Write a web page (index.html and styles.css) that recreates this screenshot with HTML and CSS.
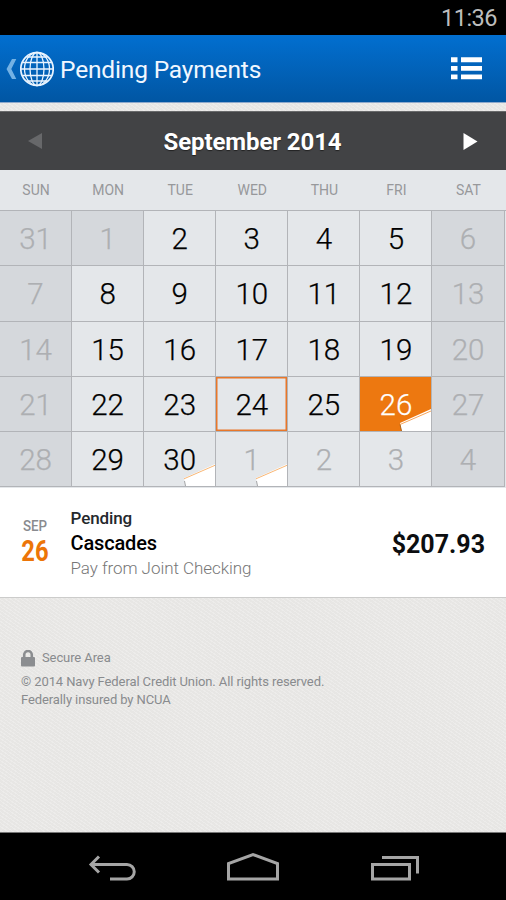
FILE: index.html
```html
<!DOCTYPE html>
<html lang="en">
<head>
<meta charset="utf-8">
<title>Pending Payments</title>
<link rel="stylesheet" href="styles.css">
</head>
<body>
<div class="status">11:36</div>
<header class="appbar">
  <svg class="back" width="12" height="22" viewBox="0 0 12 22"><path d="M6 1h4.300L5.300 11l5 10H6L0.500 11z" fill="#73b1e4"/></svg>
  <svg class="globe" width="34" height="36" viewBox="0 0 34 36" fill="none" stroke="#e9f4ff" stroke-width="1.300">
    <ellipse cx="17" cy="18" rx="16.200" ry="16.500" stroke-width="1.700"/>
    <ellipse cx="17" cy="18" rx="12.500" ry="16.500"/><ellipse cx="17" cy="18" rx="7" ry="16.500"/>
    <path d="M17 1.500v33M1 18h32M2.500 11.500h29M2.500 24.500h29M6.500 6h21M6.500 30h21"/>
  </svg>
  <h1>Pending Payments</h1>
  <svg class="list" width="31" height="23" viewBox="0 0 31 23" fill="#fff"><path d="M0 .3h6.500v5H0zM10 .3h21v5H10zM0 9h6.500v4.700H0zM10 9h21v4.700H10zM0 17.500h6.500v4.800H0zM10 17.500h21v4.800H10z"/></svg>
</header>
<nav class="month">
  <svg width="14" height="16" viewBox="0 0 14 16"><path d="M14 0v16L0 8z" fill="#67686a"/></svg>
  <h2>September 2014</h2>
  <svg width="15" height="17" viewBox="0 0 15 17"><path d="M.5 0v17l14-8.500z" fill="#fff"/></svg>
</nav>
<div class="week days"><span>SUN</span><span>MON</span><span>TUE</span><span>WED</span><span>THU</span><span>FRI</span><span>SAT</span></div>
<main class="week dates">
  <div class="off dim">31</div><div class="off dim">1</div><div>2</div><div>3</div><div>4</div><div>5</div><div class="off dim">6</div>
  <div class="off dim">7</div><div>8</div><div>9</div><div>10</div><div>11</div><div>12</div><div class="off dim">13</div>
  <div class="off dim">14</div><div>15</div><div>16</div><div>17</div><div>18</div><div>19</div><div class="off dim">20</div>
  <div class="off dim">21</div><div>22</div><div>23</div><div class="today">24</div><div>25</div>
  <div class="picked">26<svg class="fold" width="32" height="22" viewBox="0 0 32 22"><path d="M1 14L32 0v22H2.500z" fill="#fff"/><path d="M1 15.500L32 2" stroke="#f6a55b" fill="none"/><path d="M1 15.500L2.500 22" stroke="#a7641f" fill="none"/></svg></div>
  <div class="off dim">27</div>
  <div class="off dim">28</div><div>29</div>
  <div>30<svg class="fold" width="32" height="22" viewBox="0 0 32 22"><path d="M1 14L32 0v22H2.500z" fill="#fff"/><path d="M1 14.800L32 1.300" stroke="#f9b775" fill="none"/><path d="M1.500 17L2.500 22" stroke="#a4a5a7" fill="none"/></svg></div>
  <div class="dim">1<svg class="fold" width="32" height="22" viewBox="0 0 32 22"><path d="M1 14L32 0v22H2.500z" fill="#fff"/><path d="M1 14.800L32 1.300" stroke="#f9b775" fill="none"/><path d="M1.500 17L2.500 22" stroke="#a4a5a7" fill="none"/></svg></div>
  <div class="dim">2</div><div class="dim">3</div><div class="off dim">4</div>
</main>
<section class="payment">
  <div class="date"><span class="mon">SEP</span><span class="num">26</span></div>
  <div class="info"><span class="state">Pending</span><span class="payee">Cascades</span><span class="from">Pay from Joint Checking</span></div>
  <div class="amount">$207.93</div>
</section>
<footer class="legal">
  <div class="secure"><svg width="14" height="17" viewBox="0 0 14 17"><path d="M3.200 8V4.800a3.800 3.800 0 0 1 7.600 0V8" fill="none" stroke="#8b8d90" stroke-width="2.600"/><rect y="7" width="14" height="9.500" rx="1" fill="#8b8d90"/></svg><span>Secure Area</span></div>
  <p>© 2014 Navy Federal Credit Union. All rights reserved.<br>Federally insured by NCUA</p>
</footer>
<div class="navbar">
  <svg width="506" height="67" viewBox="0 0 506 67" fill="none" stroke="#a5a5a5" stroke-width="3">
    <path d="M91 31.500h36a7 7 0 0 1 0 14.500h-17M99 23.500l-8 8 8 8"/>
    <path d="M228.500 46V30.500l24.500-9 24.500 9V46z"/>
    <path d="M372.500 31.500h37V46h-37zM382 24.500h35.500V40.500"/>
  </svg>
</div>
</body>
</html>
```
FILE: styles.css
```css
* { box-sizing: border-box; }
body {
  margin: 0;
  width: 506px;
  height: 900px;
  overflow: hidden;
  display: flex;
  flex-direction: column;
  font-family: Roboto, "Liberation Sans", sans-serif;
  background-color: #e9e8e6;
  background-image: repeating-linear-gradient(35deg, rgba(255,255,255,.18) 0 1px, rgba(0,0,0,.008) 1px 3px);
}
h1, h2, p { margin: 0; }
svg { display: block; flex: none; }
.status {
  flex: none;
  height: 35px;
  padding: 0 9px 0 0;
  background: #000;
  color: #bdbdbd;
  font-size: 23.5px;
  letter-spacing: -.5px;
  line-height: 36px;
  text-align: right;
}
.appbar {
  flex: none;
  height: 68px;
  display: flex;
  align-items: center;
  padding: 0 24px 0 6px;
  background: linear-gradient(#026fd0, #0156a3);
  border-bottom: 1px solid #8ea9cc;
  color: #f1f7ff;
}
.back { margin-right: 2px; }
.globe { margin-right: 6px; }
.appbar h1 { flex: 1; font-size: 24.500px; font-weight: 400; letter-spacing: -.16px; line-height: 34px; padding-top: 2px; white-space: nowrap; }
.month {
  flex: none;
  height: 59px;
  margin-top: 8px;
  padding: 0 28px;
  display: flex;
  align-items: center;
  justify-content: space-between;
  background: #424345;
  border-top: 1px solid #696a6b;
  color: #fff;
}
.month h2 { font-size: 24px; font-weight: 700; letter-spacing: -.1px; padding-top: 1px; text-shadow: 0 1px 1px #222; }
.week { flex: none; display: grid; grid-template-columns: repeat(7, 72.080px); background: #e4e7ea; }
.days {
  height: 41px;
  border-bottom: 1px solid #b2b4b8;
  color: #97989b;
  font-size: 14px;
  line-height: 40px;
  text-align: center;
}
.dates {
  grid-template-rows: repeat(5, 55.300px);
  height: 277px;
  color: #000;
  font-size: 29.500px;
  font-weight: 300;
  -webkit-text-stroke: .25px currentColor;
  line-height: 57px;
  text-align: center;
}
.dates div { position: relative; border-right: 1px solid #b2b4b8; border-bottom: 1px solid #b2b4b8; }
.dates .off { background: #d5d8dc; }
.dates .dim { color: #adafb2; }
.dates .today { box-shadow: inset 0 0 0 1.500px #e8772a; }
.dates .picked { background: #ed7810; color: #fff; }
.fold { position: absolute; right: 0; bottom: 0; }
.payment {
  flex: none;
  height: 110px;
  display: flex;
  align-items: center;
  padding: 2px 21px 0;
  background: #fff;
  border-bottom: 1px solid #cccccb;
}
.date { width: 49.500px; display: flex; flex-direction: column; padding-bottom: 5px; }
.mon { width: 28px; text-align: center; font-size: 15.500px; line-height: 20px; font-weight: 500; color: #898b8f; transform: scaleX(.86); }
.num { width: 28px; display: flex; justify-content: center; font-size: 29px; line-height: 30px; font-weight: 700; color: #ec7508; transform: scaleX(.82); }
.info { flex: 1; display: flex; flex-direction: column; line-height: 25px; }
.state { font-size: 17px; font-weight: 500; letter-spacing: -.1px; color: #24282c; }
.payee { font-size: 20px; font-weight: 500; letter-spacing: -.15px; color: #000; }
.from { font-size: 17px; font-weight: 300; letter-spacing: -.05px; color: #777; }
.amount { font-size: 25px; font-weight: 700; color: #0c0e10; padding-top: 2px; }
.legal { flex: 1; padding: 50px 21px 0; color: #898b8e; font-size: 13px; letter-spacing: -.1px; line-height: 18px; }
.secure { display: flex; align-items: center; gap: 7px; height: 20px; margin-bottom: 5px; }
.navbar { flex: none; height: 68px; background: #000; border-top: 1px solid #777; }
```
